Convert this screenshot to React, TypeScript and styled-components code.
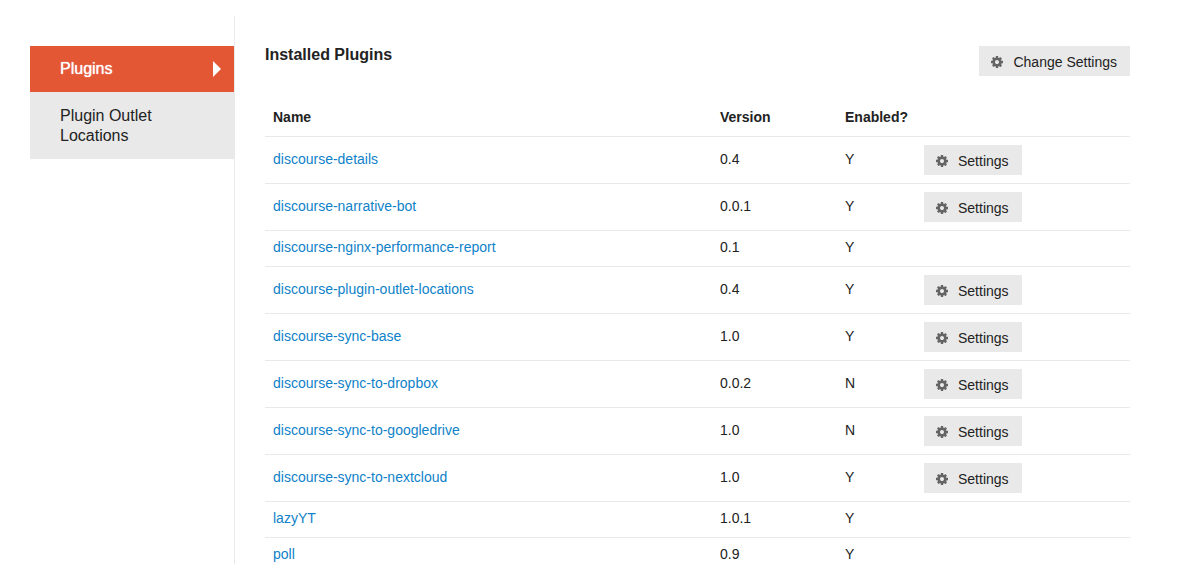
import React from "react";
import styled, { createGlobalStyle } from "styled-components";

const GlobalStyle = createGlobalStyle`
  *, *::before, *::after { box-sizing: border-box; }
  body {
    margin: 0;
    background: #fff;
    color: #222;
    font-family: "Liberation Sans", Arial, sans-serif;
    font-size: 14px;
    line-height: 19px;
  }
`;

const Page = styled.div`
  display: flex;
  min-height: 100vh;
  padding: 16px 54px 0 30px;
`;

const Sidebar = styled.nav`
  flex: 0 0 205px;
  padding-top: 30px;
  border-right: 1px solid #e9e9e9;
`;

const NavList = styled.ul`
  margin: 0;
  padding: 0;
  list-style: none;
  background: #e9e9e9;

  li + li {
    padding-top: 1px;
  }
`;

const NavLink = styled.a<{ $active?: boolean }>`
  display: flex;
  align-items: center;
  justify-content: space-between;
  padding: 13px 13px 13px 30px;
  background: ${(p) => (p.$active ? "#e45735" : "transparent")};
  color: ${(p) => (p.$active ? "#fff" : "#222")};
  text-shadow: ${(p) => (p.$active ? "0 0 1px #fff" : "none")};
  font-size: 16px;
  line-height: 20px;
  text-decoration: none;
`;

const Arrow = styled.span`
  border-left: 8px solid #fff;
  border-top: 8px solid transparent;
  border-bottom: 8px solid transparent;
`;

const Content = styled.main`
  flex: 1;
  min-width: 0;
  padding: 30px 0 0 30px;
`;

const Header = styled.header`
  display: flex;
  align-items: flex-start;
  justify-content: space-between;
  margin-bottom: 25px;
`;

const Title = styled.h1`
  margin: 0;
  font-size: 16px;
  line-height: 18px;
`;

const Button = styled.button`
  display: inline-flex;
  align-items: center;
  gap: 10px;
  height: 30px;
  padding: 2px 13px 0 12px;
  border: 0;
  background: #e9e9e9;
  color: #222;
  font: inherit;
  white-space: nowrap;
  cursor: pointer;

  svg {
    width: 12px;
    height: 12px;
    fill: #646464;
  }
`;

const Table = styled.table`
  width: 100%;
  border-collapse: separate;
  border-spacing: 0;
  table-layout: fixed;
`;

const Column = styled.col<{ $width?: number }>`
  width: ${(p) => (p.$width ? `${p.$width}px` : "auto")};
`;

const HeadCell = styled.th`
  height: 36px;
  padding: 0 8px 3px;
  border-bottom: 1px solid #e9e9e9;
  text-align: left;
`;

const Cell = styled.td`
  height: 36px;
  padding: 7px 8px 9px;
  border-bottom: 1px solid #e9e9e9;
`;

const ActionCell = styled(Cell)`
  padding: 0 8px;

  button {
    display: flex;
    margin: 8px 0;
  }
`;

const PluginLink = styled.a`
  color: #0f82c9;
  text-decoration: none;
`;

const Gear = () => (
  <svg viewBox="0 0 1536 1536" aria-hidden="true">
    <path d="M1024 768q0-106-75-181t-181-75-181 75-75 181 75 181 181 75 181-75 75-181zm512-109v222q0 12-8 23t-20 13l-185 28q-19 54-39 91 35 50 107 138 10 12 10 25t-9 23q-27 37-99 108t-94 71q-12 0-26-9l-138-108q-44 23-91 38-16 136-29 186-7 28-36 28h-222q-14 0-24.500-8.500t-11.500-21.500l-28-184q-49-16-90-37l-141 107q-10 9-25 9-14 0-25-11-126-114-165-168-7-10-7-23 0-12 8-23 15-21 51-66.500t54-70.500q-27-50-41-99l-183-27q-13-2-21-12.500t-8-23.500v-222q0-12 8-23t19-13l186-28q14-46 39-92-40-57-107-138-10-12-10-24 0-10 9-23 26-36 98.500-107.500t94.500-71.500q13 0 26 10l138 107q44-23 91-38 16-136 29-186 7-28 36-28h222q14 0 24.500 8.500t11.500 21.500l28 184q49 16 90 37l142-107q9-9 24-9 13 0 25 10 129 119 165 170 7 8 7 22 0 12-8 23-15 21-51 66.500t-54 70.500q26 50 41 98l183 28q13 2 21 12.500t8 23.500z" />
  </svg>
);

interface Plugin {
  name: string;
  version: string;
  enabled: boolean;
  settings: boolean;
}

const plugins: Plugin[] = [
  { name: "discourse-details", version: "0.4", enabled: true, settings: true },
  { name: "discourse-narrative-bot", version: "0.0.1", enabled: true, settings: true },
  { name: "discourse-nginx-performance-report", version: "0.1", enabled: true, settings: false },
  { name: "discourse-plugin-outlet-locations", version: "0.4", enabled: true, settings: true },
  { name: "discourse-sync-base", version: "1.0", enabled: true, settings: true },
  { name: "discourse-sync-to-dropbox", version: "0.0.2", enabled: false, settings: true },
  { name: "discourse-sync-to-googledrive", version: "1.0", enabled: false, settings: true },
  { name: "discourse-sync-to-nextcloud", version: "1.0", enabled: true, settings: true },
  { name: "lazyYT", version: "1.0.1", enabled: true, settings: false },
  { name: "poll", version: "0.9", enabled: true, settings: false },
];

export default function App() {
  return (
    <>
      <GlobalStyle />
      <Page>
        <Sidebar>
          <NavList>
            <li>
              <NavLink href="#plugins" $active aria-current="page">
                Plugins
                <Arrow />
              </NavLink>
            </li>
            <li>
              <NavLink href="#outlets">Plugin Outlet Locations</NavLink>
            </li>
          </NavList>
        </Sidebar>
        <Content>
          <Header>
            <Title>Installed Plugins</Title>
            <Button type="button">
              <Gear />
              Change Settings
            </Button>
          </Header>
          <Table>
            <colgroup>
              <Column />
              <Column $width={125} />
              <Column $width={79} />
              <Column $width={214} />
            </colgroup>
            <thead>
              <tr>
                <HeadCell scope="col">Name</HeadCell>
                <HeadCell scope="col">Version</HeadCell>
                <HeadCell scope="col">Enabled?</HeadCell>
                <HeadCell as="td" />
              </tr>
            </thead>
            <tbody>
              {plugins.map((plugin) => (
                <tr key={plugin.name}>
                  <Cell>
                    <PluginLink href={`#${plugin.name}`}>{plugin.name}</PluginLink>
                  </Cell>
                  <Cell>{plugin.version}</Cell>
                  <Cell>{plugin.enabled ? "Y" : "N"}</Cell>
                  <ActionCell>
                    {plugin.settings && (
                      <Button type="button">
                        <Gear />
                        Settings
                      </Button>
                    )}
                  </ActionCell>
                </tr>
              ))}
            </tbody>
          </Table>
        </Content>
      </Page>
    </>
  );
}
